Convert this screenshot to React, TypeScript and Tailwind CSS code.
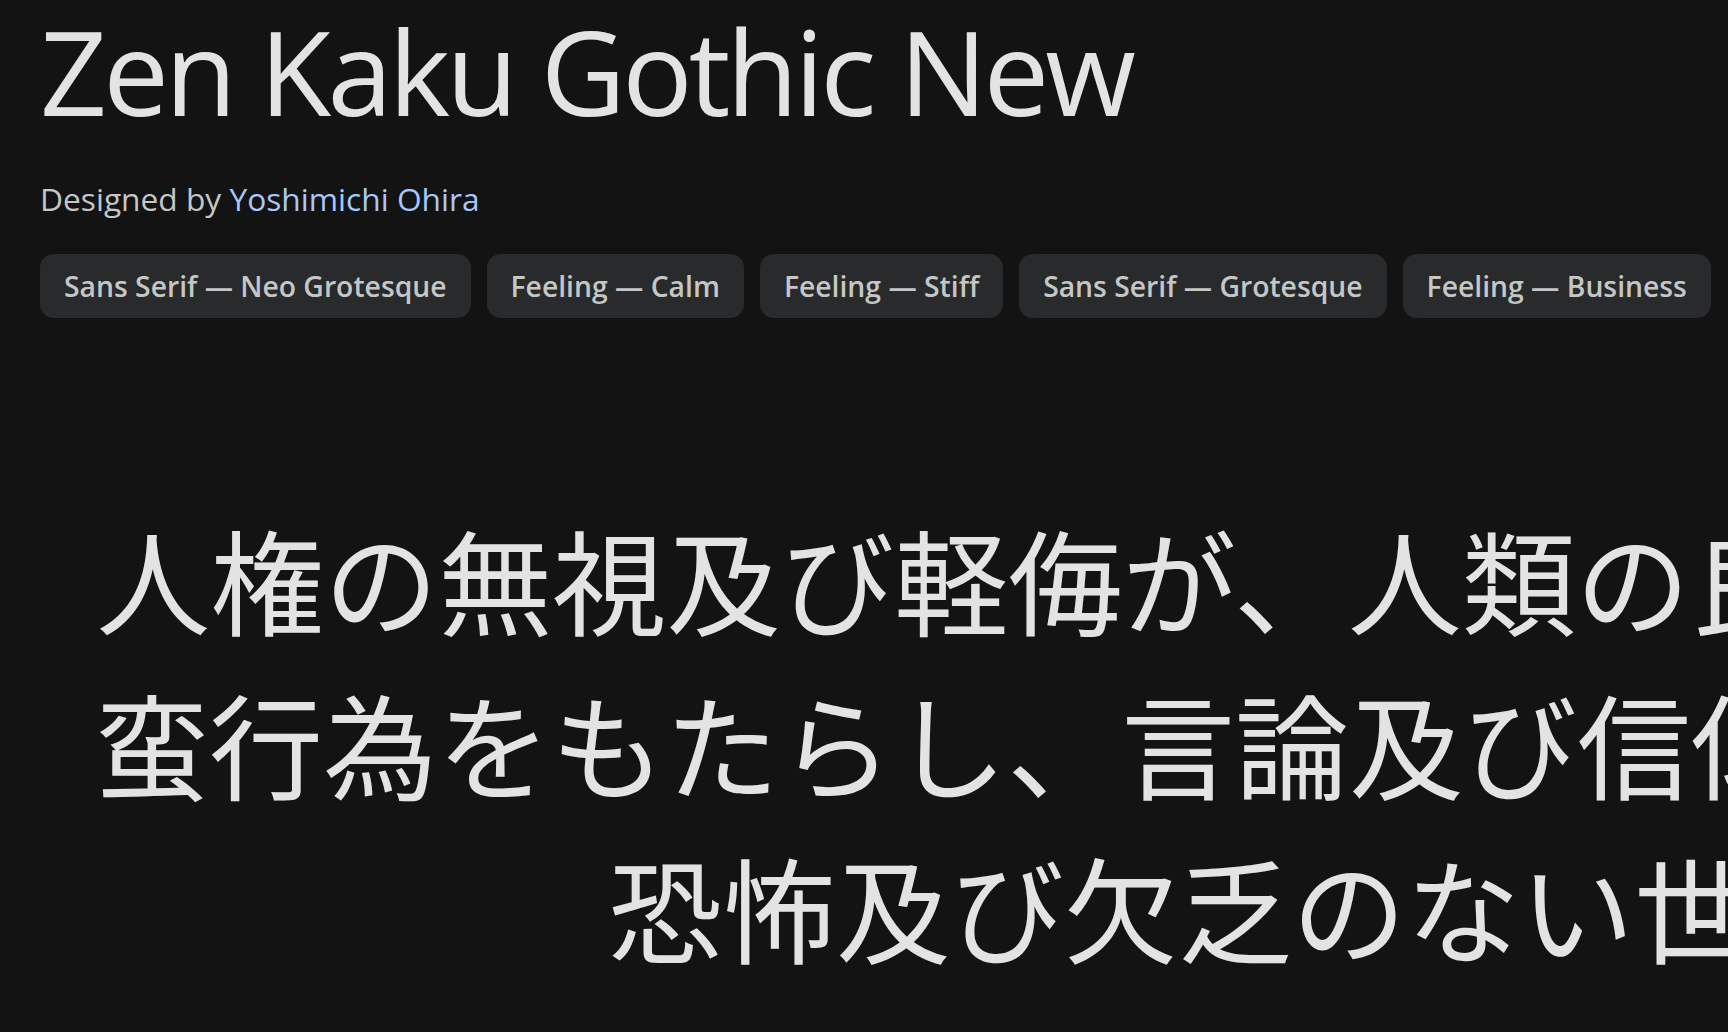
import React from 'react';

const tags = [
    'Sans Serif — Neo Grotesque',
    'Feeling — Calm',
    'Feeling — Stiff',
    'Sans Serif — Grotesque',
    'Feeling — Business',
];

const sampleLines = [
    '人権の無視及び軽侮が、人類の良心を踏みにじった野',
    '蛮行為をもたらし、言論及び信仰の自由が受けられ、',
    '恐怖及び欠乏のない世界の到来が',
];

export default function App() {
    return (
        <div className="h-[1032px] w-full overflow-hidden bg-[#131314] text-[#e3e3e3] font-['Open_Sans',sans-serif]">
            <div className="pl-[40px] pt-[12px]">
                <h1 className="text-[117px] leading-none font-normal tracking-[-3.8px]">
                    Zen Kaku Gothic New
                </h1>

                <p className="mt-[54px] text-[31.7px] leading-[32px] text-[#c4c7c5]">
                    Designed by <span className="text-[#a8c7fa]">Yoshimichi Ohira</span>
                </p>

                <div className="mt-[39px] flex gap-[16px]">
                    {tags.map(tag => (
                        <span
                            key={tag}
                            className="flex h-[64px] shrink-0 items-center rounded-[14px] bg-[#282a2c] px-[24px] text-[28.3px] font-semibold text-[#c4c7c5]"
                        >
                            {tag}
                        </span>
                    ))}
                </div>
            </div>

            <div className="mt-[178px] ml-[95px] w-[2736px] text-center text-[114px] leading-[164px] font-['Noto_Sans_CJK_JP',sans-serif] text-[#e3e3e3]">
                {sampleLines.map(line => (
                    <div key={line} className="whitespace-nowrap">
                        {line}
                    </div>
                ))}
            </div>
        </div>
    );
}
